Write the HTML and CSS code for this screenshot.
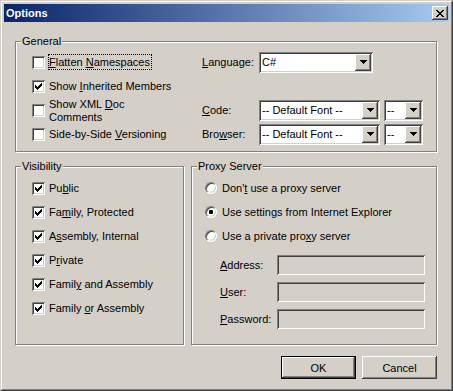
FILE: index.html
```html
<!DOCTYPE html>
<html lang="en">
<head>
  <meta charset="UTF-8">
  <meta name="viewport" content="width=device-width, initial-scale=1.0">
  <title>Options</title>
  <link rel="stylesheet" href="styles.css">
</head>
<body>

<div class="window">
  <div class="frame">
    <div class="titlebar">
      <span class="title">Options</span>
      <span class="close-btn">
        <svg width="8" height="7" viewBox="0 0 8 7"><path d="M0 0h2v1H0zM6 0h2v1H6zM1 1h2v1H1zM5 1h2v1H5zM2 2h4v1H2zM3 3h2v1H3zM2 4h4v1H2zM1 5h2v1H1zM5 5h2v1H5zM0 6h2v1H0zM6 6h2v1H6z"/></svg>
      </span>
    </div>

    <div class="content">
      <div class="group general">
        <span class="group-title">General</span>
        <div class="general-grid">
          <div class="check">
            <span class="box"></span>
            <span class="text focus"><u>F</u>latten <u>N</u>amespaces</span>
          </div>
          <span class="field-label"><u>L</u>anguage:</span>
          <div class="combo combo-lang">
            <span class="combo-text">C#</span>
            <span class="drop"><svg width="7" height="4" viewBox="0 0 7 4"><path d="M0 0h7v1H0zM1 1h5v1H1zM2 2h3v1H2zM3 3h1v1H3z"/></svg></span>
          </div>

          <div class="check">
            <span class="box checked"><svg width="7" height="7" viewBox="0 0 7 7"><path d="M0 2h1v3H0zM1 3h1v3H1zM2 4h1v3H2zM3 3h1v3H3zM4 2h1v3H4zM5 1h1v3H5zM6 0h1v3H6z"/></svg></span>
            <span class="text">Show <u>I</u>nherited Members</span>
          </div>
          <span></span>
          <span></span>

          <div class="check">
            <span class="box"></span>
            <span class="text">Show XML <u>D</u>oc<br>Comments</span>
          </div>
          <span class="field-label"><u>C</u>ode:</span>
          <div class="combo-pair">
            <div class="combo combo-font">
              <span class="combo-text">-- Default Font --</span>
              <span class="drop"><svg width="7" height="4" viewBox="0 0 7 4"><path d="M0 0h7v1H0zM1 1h5v1H1zM2 2h3v1H2zM3 3h1v1H3z"/></svg></span>
            </div>
            <div class="combo combo-size">
              <span class="combo-text">--</span>
              <span class="drop"><svg width="7" height="4" viewBox="0 0 7 4"><path d="M0 0h7v1H0zM1 1h5v1H1zM2 2h3v1H2zM3 3h1v1H3z"/></svg></span>
            </div>
          </div>

          <div class="check">
            <span class="box"></span>
            <span class="text">Side-by-Side <u>V</u>ersioning</span>
          </div>
          <span class="field-label">Bro<u>w</u>ser:</span>
          <div class="combo-pair">
            <div class="combo combo-font">
              <span class="combo-text">-- Default Font --</span>
              <span class="drop"><svg width="7" height="4" viewBox="0 0 7 4"><path d="M0 0h7v1H0zM1 1h5v1H1zM2 2h3v1H2zM3 3h1v1H3z"/></svg></span>
            </div>
            <div class="combo combo-size">
              <span class="combo-text">--</span>
              <span class="drop"><svg width="7" height="4" viewBox="0 0 7 4"><path d="M0 0h7v1H0zM1 1h5v1H1zM2 2h3v1H2zM3 3h1v1H3z"/></svg></span>
            </div>
          </div>
        </div>
      </div>

      <div class="lower">
        <div class="group visibility">
          <span class="group-title">Visibility</span>
          <div class="check row">
            <span class="box checked"><svg width="7" height="7" viewBox="0 0 7 7"><path d="M0 2h1v3H0zM1 3h1v3H1zM2 4h1v3H2zM3 3h1v3H3zM4 2h1v3H4zM5 1h1v3H5zM6 0h1v3H6z"/></svg></span>
            <span class="text">Pu<u>b</u>lic</span>
          </div>
          <div class="check row">
            <span class="box checked"><svg width="7" height="7" viewBox="0 0 7 7"><path d="M0 2h1v3H0zM1 3h1v3H1zM2 4h1v3H2zM3 3h1v3H3zM4 2h1v3H4zM5 1h1v3H5zM6 0h1v3H6z"/></svg></span>
            <span class="text">Fa<u>m</u>ily, Protected</span>
          </div>
          <div class="check row">
            <span class="box checked"><svg width="7" height="7" viewBox="0 0 7 7"><path d="M0 2h1v3H0zM1 3h1v3H1zM2 4h1v3H2zM3 3h1v3H3zM4 2h1v3H4zM5 1h1v3H5zM6 0h1v3H6z"/></svg></span>
            <span class="text">A<u>s</u>sembly, Internal</span>
          </div>
          <div class="check row">
            <span class="box checked"><svg width="7" height="7" viewBox="0 0 7 7"><path d="M0 2h1v3H0zM1 3h1v3H1zM2 4h1v3H2zM3 3h1v3H3zM4 2h1v3H4zM5 1h1v3H5zM6 0h1v3H6z"/></svg></span>
            <span class="text">P<u>r</u>ivate</span>
          </div>
          <div class="check row">
            <span class="box checked"><svg width="7" height="7" viewBox="0 0 7 7"><path d="M0 2h1v3H0zM1 3h1v3H1zM2 4h1v3H2zM3 3h1v3H3zM4 2h1v3H4zM5 1h1v3H5zM6 0h1v3H6z"/></svg></span>
            <span class="text">Famil<u>y</u> and Assembly</span>
          </div>
          <div class="check row">
            <span class="box checked"><svg width="7" height="7" viewBox="0 0 7 7"><path d="M0 2h1v3H0zM1 3h1v3H1zM2 4h1v3H2zM3 3h1v3H3zM4 2h1v3H4zM5 1h1v3H5zM6 0h1v3H6z"/></svg></span>
            <span class="text">Family <u>o</u>r Assembly</span>
          </div>
        </div>

        <div class="group proxy">
          <span class="group-title">Proxy Server</span>
          <div class="radio row">
            <span class="circle"></span>
            <span class="text">Don'<u>t</u> use a proxy server</span>
          </div>
          <div class="radio row">
            <span class="circle selected"><span class="dot"></span></span>
            <span class="text">Use settin<u>g</u>s from Internet Explorer</span>
          </div>
          <div class="radio row">
            <span class="circle"></span>
            <span class="text">Use a private pro<u>x</u>y server</span>
          </div>
          <div class="proxy-fields">
            <span class="field-label"><u>A</u>ddress:</span>
            <span class="field"></span>
            <span class="field-label"><u>U</u>ser:</span>
            <span class="field"></span>
            <span class="field-label"><u>P</u>assword:</span>
            <span class="field"></span>
          </div>
        </div>
      </div>

      <div class="buttons">
        <span class="btn default"><span class="btn-face">OK</span></span>
        <span class="btn"><span class="btn-face">Cancel</span></span>
      </div>
    </div>
  </div>
</div>

</body>
</html>
```

FILE: styles.css
```css
* {
  box-sizing: border-box;
}

body {
  margin: 0;
  background: #d4d0c8;
  font-family: "Liberation Sans", Arial, sans-serif;
  font-size: 11px;
  color: #000;
}

u {
  text-underline-offset: 1px;
}

.window {
  width: 453px;
  height: 391px;
  border: 1px solid;
  border-color: #d4d0c8 #404040 #404040 #d4d0c8;
}

.frame {
  height: 100%;
  border: 1px solid;
  border-color: #fff #808080 #808080 #fff;
  padding: 2px;
  display: flex;
  flex-direction: column;
}

.titlebar {
  height: 18px;
  background: linear-gradient(to right, #0a246a, #a6caf0);
  display: flex;
  align-items: center;
  justify-content: space-between;
  padding: 0 1px 0 2px;
}

.title {
  color: #fff;
  font-weight: bold;
  font-size: 11px;
}

.close-btn {
  width: 16px;
  height: 14px;
  background: #d4d0c8;
  display: flex;
  align-items: center;
  justify-content: center;
  box-shadow: inset -1px -1px 0 #404040, inset 1px 1px 0 #fff, inset -2px -2px 0 #808080;
}

.content {
  flex: 1;
  padding: 19px 12px 0 11px;
}

/* etched group boxes */
.group {
  position: relative;
  border: 1px solid #808080;
  box-shadow: 1px 1px 0 #fff, inset 1px 1px 0 #fff;
}

.group-title {
  position: absolute;
  top: -7px;
  left: 5px;
  padding: 0 1px;
  line-height: 13px;
  background: #d4d0c8;
}

.general {
  height: 111px;
  padding: 8px 0 0 16px;
}

.general-grid {
  display: grid;
  grid-template-columns: 170px 57px auto;
  grid-template-rows: repeat(4, 24px);
  align-items: center;
}

.check,
.radio {
  display: flex;
  align-items: center;
}

.check {
  gap: 3px;
}

.radio {
  gap: 4px;
}

.row {
  height: 24px;
}

.text {
  line-height: 13px;
  border: 1px solid transparent;
  padding: 1px 1px 0 0;
}

.text.focus {
  border: 1px dotted #000;
}

.box {
  width: 13px;
  height: 13px;
  flex: none;
  background: #fff;
  display: flex;
  align-items: center;
  justify-content: center;
  box-shadow: inset 1px 1px 0 #808080, inset -1px -1px 0 #fff, inset 2px 2px 0 #404040, inset -2px -2px 0 #d4d0c8;
}

.circle {
  width: 12px;
  height: 12px;
  flex: none;
  border-radius: 50%;
  background: #fff;
  border: 1px solid;
  border-color: #808080 #fff #fff #808080;
  box-shadow: inset 1px 1px 0 #404040, inset -1px -1px 0 #d4d0c8;
  display: flex;
  align-items: center;
  justify-content: center;
}

.dot {
  width: 4px;
  height: 4px;
  border-radius: 1px;
  background: #000;
}

.field-label {
  line-height: 13px;
}

.combo {
  height: 21px;
  background: #fff;
  display: flex;
  align-items: center;
  padding: 2px;
  box-shadow: inset 1px 1px 0 #808080, inset -1px -1px 0 #fff, inset 2px 2px 0 #404040, inset -2px -2px 0 #d4d0c8;
}

.combo-text {
  flex: 1;
  padding-left: 1px;
  white-space: nowrap;
  overflow: hidden;
}

.drop {
  width: 16px;
  height: 17px;
  flex: none;
  background: #d4d0c8;
  display: flex;
  align-items: center;
  justify-content: center;
  box-shadow: inset -1px -1px 0 #404040, inset 1px 1px 0 #fff, inset -2px -2px 0 #808080;
}

.combo-lang {
  width: 114px;
}

.combo-pair {
  display: flex;
  gap: 4px;
}

.combo-font {
  width: 121px;
}

.combo-size {
  width: 39px;
}

.lower {
  display: flex;
  gap: 7px;
  margin-top: 14px;
  height: 179px;
}

.visibility {
  width: 169px;
  padding: 9px 0 0 16px;
}

.proxy {
  flex: 1;
  padding: 9px 0 0 13px;
}

.proxy-fields {
  display: grid;
  grid-template-columns: 57px 148px;
  grid-auto-rows: 20px;
  row-gap: 7px;
  align-items: center;
  margin-top: 7px;
  padding-left: 15px;
}

.field {
  height: 20px;
  background: #d4d0c8;
  box-shadow: inset 1px 1px 0 #808080, inset -1px -1px 0 #fff, inset 2px 2px 0 #404040, inset -2px -2px 0 #d4d0c8;
}

.buttons {
  display: flex;
  justify-content: flex-end;
  gap: 6px;
  margin-top: 11px;
}

.btn {
  width: 75px;
  height: 23px;
  display: flex;
}

.btn.default {
  border: 1px solid #000;
}

.btn-face {
  flex: 1;
  display: flex;
  align-items: center;
  justify-content: center;
  background: #d4d0c8;
  box-shadow: inset -1px -1px 0 #404040, inset 1px 1px 0 #fff, inset -2px -2px 0 #808080;
}
```
